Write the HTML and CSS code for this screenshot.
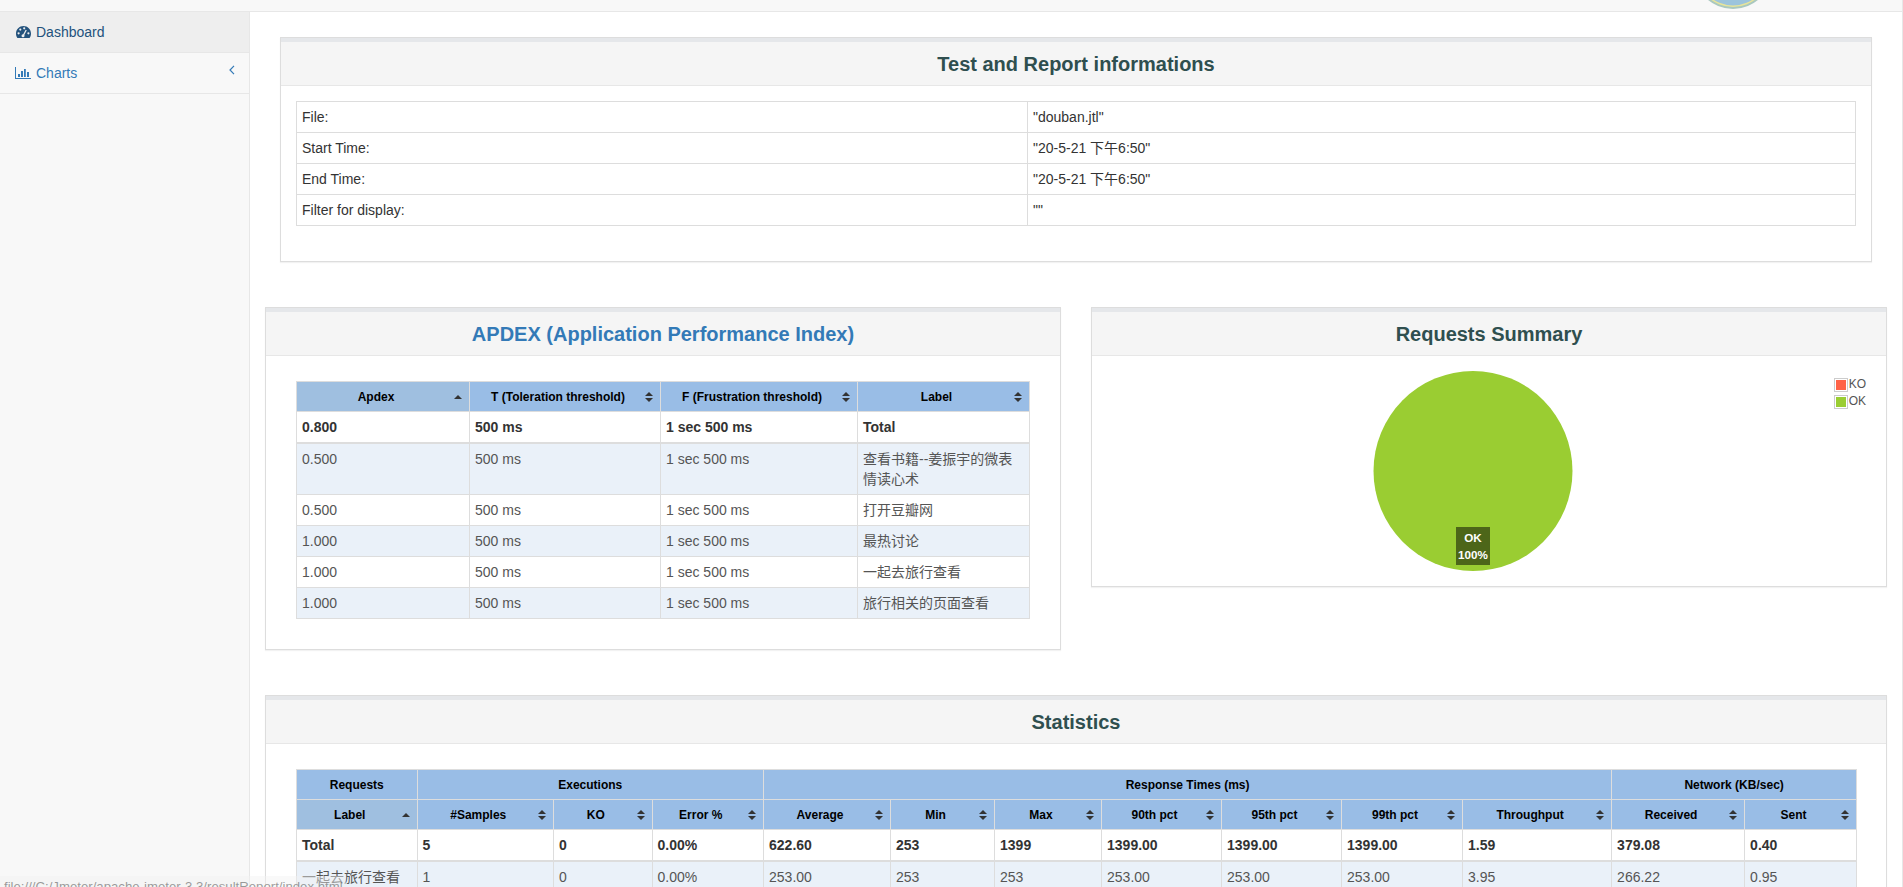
FILE: index.html
```html
<!DOCTYPE html>
<html lang="en">
<head>
<meta charset="utf-8">
<title>Dashboard</title>
<link rel="stylesheet" href="styles.css">
</head>
<body>
<div class="app">
  <header class="navbar">
    <svg class="logo" width="60" height="11" viewBox="0 0 60 11" aria-hidden="true">
      <circle cx="30" cy="-30" r="39" fill="#a9c8bf"/>
      <circle cx="30" cy="-30" r="37" fill="#e6e49b"/>
      <circle cx="30" cy="-30" r="35.5" fill="#9cc4dc"/>
    </svg>
  </header>
  <div class="layout">
    <nav class="sidebar">
      <a class="nav-item active">
        <svg class="nav-icon" width="15" height="12" viewBox="0 0 15 12" aria-hidden="true">
          <path fill="#23527c" d="M7.5 0C3.4 0 0 3.3 0 7.5c0 1.7.5 3.2 1.4 4.5h12.2c.9-1.3 1.4-2.8 1.4-4.5C15 3.3 11.6 0 7.5 0z"/>
          <circle cx="2.6" cy="7.3" r="1.1" fill="#eee"/>
          <circle cx="4.3" cy="3.6" r="1.1" fill="#eee"/>
          <circle cx="8.2" cy="2.3" r="1.1" fill="#eee"/>
          <circle cx="12.4" cy="7.3" r="1.1" fill="#eee"/>
          <path stroke="#eee" stroke-width="1.3" d="M7 10l3.2-6"/>
          <circle cx="7" cy="9.7" r="1.5" fill="#eee"/>
        </svg>
        Dashboard
      </a>
      <a class="nav-item">
        <svg class="nav-icon chart-icon" width="16" height="12" viewBox="0 0 16 12" aria-hidden="true">
          <path fill="#337ab7" d="M0 0h1v11h15v1H0zM3 7h2v3H3zM6 4h2v6H6zM9 2h1.800v8H9zM12 5h2v5h-2z"/>
        </svg>
        Charts
        <svg class="chevron" width="6" height="10" viewBox="0 0 6 10" aria-hidden="true">
          <path fill="none" stroke="#337ab7" stroke-width="1.200" d="M5 .8L1 5l4 4.200"/>
        </svg>
      </a>
    </nav>
    <main class="content">
      <section class="panel panel-inset">
        <div class="panel-heading"><h3>Test and Report informations</h3></div>
        <div class="panel-body body-info">
          <table class="grid info">
            <colgroup><col class="c1"><col class="c2"></colgroup>
            <tbody>
              <tr><td>File:</td><td>"douban.jtl"</td></tr>
              <tr><td>Start Time:</td><td>"20-5-21 下午6:50"</td></tr>
              <tr><td>End Time:</td><td>"20-5-21 下午6:50"</td></tr>
              <tr><td>Filter for display:</td><td>""</td></tr>
            </tbody>
          </table>
        </div>
      </section>

      <div class="row">
        <section class="panel">
          <div class="panel-heading"><h3 class="link-title">APDEX (Application Performance Index)</h3></div>
          <div class="panel-body">
            <table class="grid apdex">
              <colgroup><col class="c1"><col class="c2"><col class="c3"><col class="c4"></colgroup>
              <thead>
                <tr>
                  <th class="sorted"><span class="th-in"><span class="th-label">Apdex</span><i class="sort asc"></i></span></th>
                  <th><span class="th-in"><span class="th-label">T (Toleration threshold)</span><i class="sort"></i></span></th>
                  <th><span class="th-in"><span class="th-label">F (Frustration threshold)</span><i class="sort"></i></span></th>
                  <th><span class="th-in"><span class="th-label">Label</span><i class="sort"></i></span></th>
                </tr>
              </thead>
              <tbody>
                <tr class="total"><td>0.800</td><td>500 ms</td><td>1 sec 500 ms</td><td>Total</td></tr>
                <tr class="odd"><td>0.500</td><td>500 ms</td><td>1 sec 500 ms</td><td>查看书籍--姜振宇的微表情读心术</td></tr>
                <tr><td>0.500</td><td>500 ms</td><td>1 sec 500 ms</td><td>打开豆瓣网</td></tr>
                <tr class="odd"><td>1.000</td><td>500 ms</td><td>1 sec 500 ms</td><td>最热讨论</td></tr>
                <tr><td>1.000</td><td>500 ms</td><td>1 sec 500 ms</td><td>一起去旅行查看</td></tr>
                <tr class="odd"><td>1.000</td><td>500 ms</td><td>1 sec 500 ms</td><td>旅行相关的页面查看</td></tr>
              </tbody>
            </table>
          </div>
        </section>

        <section class="panel panel-summary">
          <div class="panel-heading"><h3>Requests Summary</h3></div>
          <div class="plot">
            <svg class="pie" width="200" height="200" viewBox="0 0 200 200" aria-hidden="true">
              <ellipse cx="100" cy="100" rx="99.500" ry="100" fill="#9acd32"/>
            </svg>
            <div class="pie-label">OK<br>100%</div>
            <ul class="legend">
              <li><i class="swatch ko"></i>KO</li>
              <li><i class="swatch ok"></i>OK</li>
            </ul>
          </div>
        </section>
      </div>

      <section class="panel">
        <div class="panel-heading"><h3>Statistics</h3></div>
        <div class="panel-body">
          <table class="grid stats">
            <colgroup>
              <col class="c1"><col class="c2"><col class="c3"><col class="c4"><col class="c5"><col class="c6"><col class="c7"><col class="c8"><col class="c9"><col class="c10"><col class="c11"><col class="c12"><col class="c13">
            </colgroup>
            <thead>
              <tr class="group">
                <th>Requests</th>
                <th colspan="3">Executions</th>
                <th colspan="7">Response Times (ms)</th>
                <th colspan="2">Network (KB/sec)</th>
              </tr>
              <tr>
                <th class="sorted"><span class="th-in"><span class="th-label">Label</span><i class="sort asc"></i></span></th>
                <th><span class="th-in"><span class="th-label">#Samples</span><i class="sort"></i></span></th>
                <th><span class="th-in"><span class="th-label">KO</span><i class="sort"></i></span></th>
                <th><span class="th-in"><span class="th-label">Error %</span><i class="sort"></i></span></th>
                <th><span class="th-in"><span class="th-label">Average</span><i class="sort"></i></span></th>
                <th><span class="th-in"><span class="th-label">Min</span><i class="sort"></i></span></th>
                <th><span class="th-in"><span class="th-label">Max</span><i class="sort"></i></span></th>
                <th><span class="th-in"><span class="th-label">90th pct</span><i class="sort"></i></span></th>
                <th><span class="th-in"><span class="th-label">95th pct</span><i class="sort"></i></span></th>
                <th><span class="th-in"><span class="th-label">99th pct</span><i class="sort"></i></span></th>
                <th><span class="th-in"><span class="th-label">Throughput</span><i class="sort"></i></span></th>
                <th><span class="th-in"><span class="th-label">Received</span><i class="sort"></i></span></th>
                <th><span class="th-in"><span class="th-label">Sent</span><i class="sort"></i></span></th>
              </tr>
            </thead>
            <tbody>
              <tr class="total"><td>Total</td><td>5</td><td>0</td><td>0.00%</td><td>622.60</td><td>253</td><td>1399</td><td>1399.00</td><td>1399.00</td><td>1399.00</td><td>1.59</td><td>379.08</td><td>0.40</td></tr>
              <tr class="odd"><td>一起去旅行查看</td><td>1</td><td>0</td><td>0.00%</td><td>253.00</td><td>253</td><td>253</td><td>253.00</td><td>253.00</td><td>253.00</td><td>3.95</td><td>266.22</td><td>0.95</td></tr>
            </tbody>
          </table>
        </div>
      </section>
    </main>
  </div>
  <div class="status-bubble">file:///C:/Jmeter/apache-jmeter-3.3/resultReport/index.html</div>
</div>
</body>
</html>
```
FILE: styles.css
```css
* { box-sizing: border-box; }
html, body { margin: 0; height: 887px; overflow: hidden; }
body {
  font-family: "Liberation Sans", "Noto Sans CJK SC", sans-serif;
  font-size: 14px;
  line-height: 20px;
  color: #333;
  background: #fff;
}
.app {
  position: relative;
  height: 887px;
  overflow: hidden;
  display: flex;
  flex-direction: column;
  border-right: 1px solid #e7e7e7;
}
.navbar {
  flex: none;
  height: 12px;
  background: #f8f8f8;
  border-bottom: 1px solid #e7e7e7;
  display: flex;
  justify-content: flex-end;
  padding-right: 139px;
  overflow: hidden;
}
.logo { display: block; filter: blur(.6px); }
.layout { flex: 1; display: flex; min-height: 0; }
.sidebar {
  flex: none;
  width: 250px;
  background: #f8f8f8;
  border-right: 1px solid #e7e7e7;
}
.nav-item {
  display: flex;
  align-items: center;
  height: 41px;
  padding: 0 15px;
  color: #337ab7;
  border-bottom: 1px solid #e7e7e7;
}
.nav-item.active { background: #eee; color: #23527c; }
.nav-icon { margin: 0 5px 0 1px; }
.chart-icon { margin: 0 5px 0 0; }
.chevron { margin: -6px 0 0 auto; transform: translateX(1px); }

.content {
  flex: 1;
  min-width: 0;
  padding: 25px 15px 0 15px;
}
.panel {
  background: #fff;
  border: 1px solid #ddd;
  box-shadow: 0 1px 1px rgba(0,0,0,.05);
}
.panel-inset { margin: 0 15px 45px; height: 225px; }
.panel-heading {
  border-top: 4px solid #e5e7ea;
  border-bottom: 1px solid #e7e7e7;
  background: #f5f5f5;
  height: 48px;
  padding-top: 1px;
  display: flex;
  align-items: center;
  justify-content: center;
}
h3 {
  margin: 0;
  font-size: 20px;
  line-height: 22px;
  font-weight: bold;
  color: #2f4f4f;
}
h3.link-title { color: #337ab7; }
.panel-body { padding: 25px 30px 30px; }
.body-info { padding: 15px 15px 0; }
.row {
  display: grid;
  grid-template-columns: 1fr 1fr;
  column-gap: 30px;
  align-items: start;
  margin-bottom: 45px;
}
.plot { position: relative; height: 230px; padding: 15px 0 0 281px; }
.pie { display: block; }
.pie-label {
  position: absolute;
  left: 364px;
  top: 171px;
  width: 34px;
  height: 38px;
  padding-top: 2px;
  background: rgba(0,0,0,.5);
  color: #fff;
  font-size: 11.67px;
  font-weight: bold;
  line-height: 17px;
  text-align: center;
}
.legend {
  position: absolute;
  right: 20px;
  top: 20px;
  margin: 0;
  padding: 0;
  list-style: none;
  font-size: 12px;
  line-height: 17px;
  color: #545454;
}
.legend li { display: flex; align-items: center; }
.swatch {
  width: 14px;
  height: 14px;
  border: 1px solid #ccc;
  padding: 1px;
  background-clip: content-box;
  margin-right: 1px;
}
.swatch.ko { background-color: #ff6347; }
.swatch.ok { background-color: #9acd32; }

.grid {
  border-collapse: collapse;
  table-layout: fixed;
  width: 100%;
}
.grid td, .grid th {
  border: 1px solid #ddd;
  padding: 5px;
  vertical-align: top;
  line-height: 20px;
  overflow-wrap: anywhere;
}
.grid td { color: #555; }
.info td { color: #333; }
.grid th {
  background: #99bde6;
  color: #000;
  font-size: 12px;
  font-weight: bold;
  text-align: center;
  padding: 5px 5px 4px;
}
.grid th.sorted { background: #9fbfe0; }
.th-in { display: flex; align-items: center; }
.th-label { flex: 1; text-align: center; }
.sort {
  flex: none;
  width: 8px;
  height: 10px;
  margin: 0 2px 0 4px;
  position: relative;
}
.sort::before, .sort::after {
  content: "";
  position: absolute;
  left: 0;
  border-left: 4px solid transparent;
  border-right: 4px solid transparent;
}
.sort::before { top: 0; border-bottom: 4px solid #333; }
.sort::after { bottom: 0; border-top: 4px solid #333; }
.sort.asc::after { display: none; }
.sort.asc::before { top: 3px; }
.total td { font-weight: bold; color: #333; border-bottom: 2px solid #ddd; }
.odd td { background: #eaf1f9; }

.info .c1 { width: 731px; }
.apdex { width: 733px; }
.apdex .c1 { width: 173px; }
.apdex .c2 { width: 191px; }
.apdex .c3 { width: 197px; }
.apdex .c4 { width: 172px; }
.stats { width: 1560px; }
.stats .c1 { width: 120.500px; }
.stats .c2 { width: 136.500px; }
.stats .c3 { width: 98.500px; }
.stats .c4 { width: 111.500px; }
.stats .c5 { width: 127px; }
.stats .c6 { width: 104px; }
.stats .c7 { width: 107px; }
.stats .c8 { width: 120px; }
.stats .c9 { width: 120px; }
.stats .c10 { width: 121px; }
.stats .c11 { width: 149px; }
.stats .c12 { width: 133px; }
.stats .c13 { width: 112px; }

.status-bubble {
  position: absolute;
  left: 0;
  top: 876px;
  height: 11px;
  padding: 3px 0 0 4px;
  width: 346px;
  overflow: hidden;
  white-space: nowrap;
  background: rgba(242,242,242,.45);
  color: rgba(60,60,60,.5);
  font-size: 13.2px;
  line-height: 16px;
}
```
